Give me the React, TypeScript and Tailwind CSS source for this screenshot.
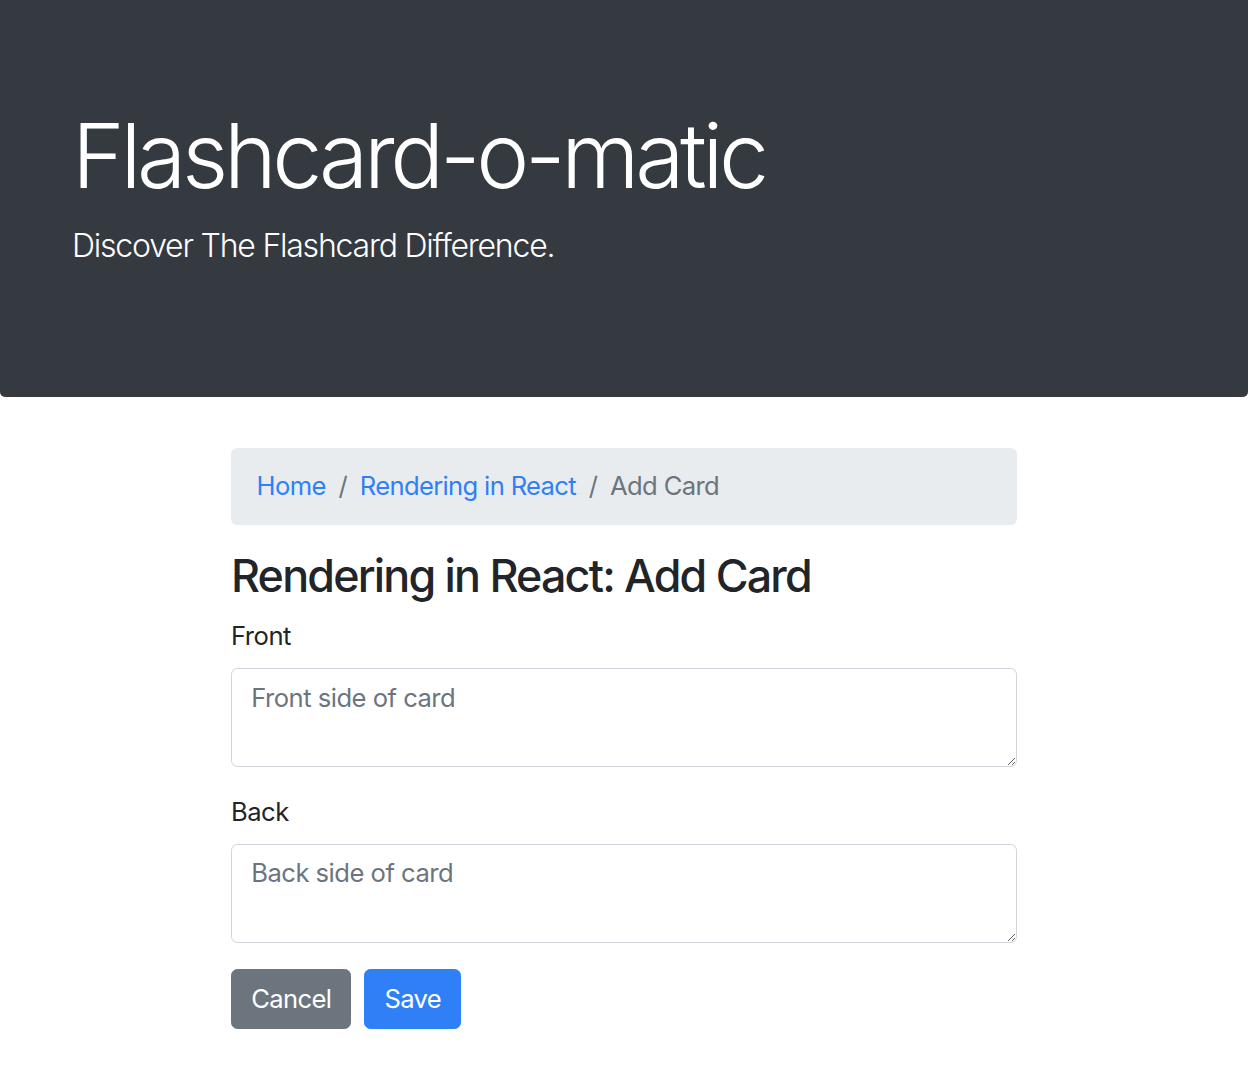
import React from "react";

const font = { fontFamily: "Inter, 'Noto Sans', sans-serif" };

function Breadcrumb() {
  return (
    <nav className="mb-[25.6px] flex items-center rounded-[6.4px] bg-[#e9ecef] px-[25.6px] py-[19.2px] text-[25.6px] leading-[38.4px] tracking-[-0.026em]">
      <a href="#" className="text-[#2f80f6]">
        Home
      </a>
      <span className="px-[12.8px] text-[#6c757d]">/</span>
      <a href="#" className="text-[#2f80f6]">
        Rendering in React
      </a>
      <span className="px-[12.8px] text-[#6c757d]">/</span>
      <span className="text-[#6c757d]">Add Card</span>
    </nav>
  );
}

function Field({ id, label, placeholder }: { id: string; label: string; placeholder: string }) {
  return (
    <div className="mb-[25.6px]">
      <label htmlFor={id} className="mb-[12.8px] block text-[25.6px] leading-[38.4px] tracking-[-0.02em] text-[#212529]">
        {label}
      </label>
      <textarea
        id={id}
        rows={2}
        placeholder={placeholder}
        className="block h-[99px] w-full rounded-[6.4px] border-[1.6px] border-[#ced4da] bg-white px-[19.2px] py-[9.6px] text-[25.6px] leading-[38.4px] tracking-[-0.02em] text-[#495057] placeholder:text-[#6c757d] focus:outline-none"
      />
    </div>
  );
}

export default function App() {
  return (
    <div className="min-h-screen bg-white text-[#212529]" style={font}>
      <header className="rounded-b-[5px] bg-[#343a40] px-[72px] pb-[101px] pt-[102px] text-white">
        <h1 className="mb-[12.8px] text-[89.6px] font-light leading-[1.2] tracking-[-0.048em]">Flashcard-o-matic</h1>
        <p className="mb-[25.6px] text-[32px] font-light leading-[48px] tracking-[-0.038em]">
          Discover The Flashcard Difference.
        </p>
      </header>

      <main className="mx-auto w-[786px] pt-[51px]">
        <Breadcrumb />
        <h3 className="mb-[12.8px] text-[44.8px] font-medium leading-[1.2] tracking-[-0.04em]">
          Rendering in React: Add Card
        </h3>
        <form>
          <Field id="front" label="Front" placeholder="Front side of card" />
          <Field id="back" label="Back" placeholder="Back side of card" />
          <div className="flex gap-[12.8px] pt-[1px]">
            <button
              type="button"
              className="rounded-[6.4px] border-[1.6px] border-[#6c757d] bg-[#6c757d] px-[19.2px] py-[9.6px] text-[25.6px] leading-[38.4px] tracking-[-0.025em] text-white"
            >
              Cancel
            </button>
            <button
              type="submit"
              className="rounded-[6.4px] border-[1.6px] border-[#2f80f6] bg-[#2f80f6] px-[19.2px] py-[9.6px] text-[25.6px] leading-[38.4px] tracking-[-0.025em] text-white"
            >
              Save
            </button>
          </div>
        </form>
      </main>
    </div>
  );
}
